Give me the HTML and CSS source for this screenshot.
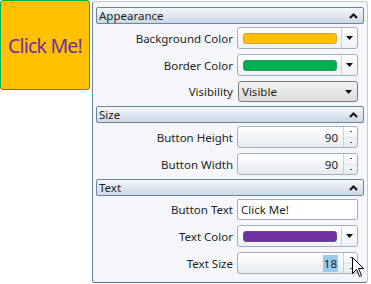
FILE: index.html
```html
<!DOCTYPE html>
<html>
<head>
  <title>Property Grid</title>
  <link rel="stylesheet" href="styles.css">
</head>
<body>

  <div class="stage">
    <button class="demo">Click Me!</button>

    <div class="grid">

      <section class="cat">
        <div class="cat-head">
          <span>Appearance</span>
          <svg class="chev" width="9" height="6" viewBox="0 0 9 6"><polyline points="1,5 4.5,1.5 8,5" /></svg>
        </div>
        <div class="rows">
          <div class="row">
            <label>Background Color</label>
            <div class="picker">
              <span class="swatch yellow"></span>
              <span class="drop"><svg width="7" height="4" viewBox="0 0 7 4"><polygon points="0,0 7,0 3.5,4" /></svg></span>
            </div>
          </div>
          <div class="row">
            <label>Border Color</label>
            <div class="picker">
              <span class="swatch green"></span>
              <span class="drop"><svg width="7" height="4" viewBox="0 0 7 4"><polygon points="0,0 7,0 3.5,4" /></svg></span>
            </div>
          </div>
          <div class="row">
            <label>Visibility</label>
            <div class="combo">
              <span>Visible</span>
              <svg width="7" height="4" viewBox="0 0 7 4"><polygon points="0,0 7,0 3.5,4" /></svg>
            </div>
          </div>
        </div>
      </section>

      <section class="cat">
        <div class="cat-head">
          <span>Size</span>
          <svg class="chev" width="9" height="6" viewBox="0 0 9 6"><polyline points="1,5 4.5,1.5 8,5" /></svg>
        </div>
        <div class="rows">
          <div class="row">
            <label>Button Height</label>
            <div class="spin">
              <span class="num">90</span>
              <span class="spin-btns"><i></i><i></i></span>
            </div>
          </div>
          <div class="row">
            <label>Button Width</label>
            <div class="spin">
              <span class="num">90</span>
              <span class="spin-btns"><i></i><i></i></span>
            </div>
          </div>
        </div>
      </section>

      <section class="cat">
        <div class="cat-head">
          <span>Text</span>
          <svg class="chev" width="9" height="6" viewBox="0 0 9 6"><polyline points="1,5 4.5,1.5 8,5" /></svg>
        </div>
        <div class="rows">
          <div class="row">
            <label>Button Text</label>
            <div class="textbox">Click Me!</div>
          </div>
          <div class="row">
            <label>Text Color</label>
            <div class="picker">
              <span class="swatch purple"></span>
              <span class="drop"><svg width="7" height="4" viewBox="0 0 7 4"><polygon points="0,0 7,0 3.5,4" /></svg></span>
            </div>
          </div>
          <div class="row">
            <label>Text Size</label>
            <div class="spin">
              <span class="num"><span class="sel">18</span></span>
              <span class="spin-btns"><i></i><i></i></span>
            </div>
          </div>
        </div>
      </section>

    </div>
  </div>

  <!-- mouse pointer over the spinner -->
  <svg class="cursor" width="13" height="21" viewBox="0 0 13 21">
    <polygon points="0.5,0.5 0.5,16.5 4.5,12.5 7.5,19.5 9.5,18.5 6.5,11.5 11.5,11.5" />
  </svg>

</body>
</html>
```

FILE: styles.css
```css
body {
  margin: 0;
  background: #ffffff;
  font-family: "Noto Sans", "Open Sans", sans-serif;
  font-size: 11.5px;
  color: #1e1e1e;
}

.stage {
  display: flex;
  align-items: flex-start;
}

.demo {
  width: 90px;
  height: 90px;
  padding: 0;
  background: #ffc000;
  border: 1px solid #00b050;
  border-radius: 3px;
  color: #7030a0;
  font-family: "Noto Sans", sans-serif;
  font-size: 19.5px;
  letter-spacing: -0.8px;
}

.grid {
  width: 276px;
  height: 282px;
  box-sizing: border-box;
  margin: 1px 0 0 2px;
  padding: 5px 3px 0 3px;
  background: #f4f6f9;
  border: 1px solid #c3ccd6;
  border-left-color: #6f849a;
  border-bottom-color: #5e7186;
  border-radius: 3px;
}

.cat-head {
  height: 17px;
  box-sizing: border-box;
  display: flex;
  align-items: center;
  justify-content: space-between;
  padding: 0 5px 0 2px;
  border: 1px solid #6a86a2;
  border-radius: 2px;
  background: linear-gradient(#f4f7fa, #cbd7e3);
}

.chev polyline {
  fill: none;
  stroke: #111;
  stroke-width: 2;
}

.rows {
  display: flex;
  flex-direction: column;
  gap: 5px;
  padding: 3px 0 4px;
}

.row {
  display: grid;
  grid-template-columns: 137px 121px;
  column-gap: 4px;
  align-items: center;
}

.row label {
  text-align: right;
  white-space: nowrap;
}

/* colour picker */
.picker {
  height: 22px;
  box-sizing: border-box;
  display: flex;
  align-items: center;
  padding-left: 5px;
  border: 1px solid #a3afbd;
  border-radius: 3px;
  background: linear-gradient(#ffffff, #eef1f5);
}

.swatch {
  width: 94px;
  height: 11px;
  box-sizing: border-box;
  border-radius: 3px;
  border: 1px solid;
}

.swatch.yellow { background: #ffc000; border-color: #c9a23a; }
.swatch.green { background: #00b050; border-color: #2f9a5c; }
.swatch.purple { background: #7030a0; border-color: #6a4a8a; }

.drop {
  margin-left: auto;
  width: 15px;
  height: 100%;
  display: flex;
  align-items: center;
  justify-content: center;
  border-left: 1px solid #c9d0d8;
}

.drop polygon,
.combo polygon {
  fill: #111;
}

/* combobox */
.combo {
  height: 21px;
  box-sizing: border-box;
  display: flex;
  align-items: center;
  justify-content: space-between;
  padding: 0 5px 0 3px;
  margin-left: 1px;
  border: 1px solid #7a7a7a;
  border-radius: 3px;
  background: linear-gradient(#f3f3f3, #dcdcdc);
}

/* numeric spinner */
.spin {
  height: 22px;
  box-sizing: border-box;
  display: flex;
  border: 1px solid #a3afbd;
  border-radius: 3px;
  background: linear-gradient(#ffffff, #e6ebf1);
}

.spin .num {
  flex: 1;
  display: flex;
  align-items: center;
  justify-content: flex-end;
  padding-right: 5px;
}

.sel {
  background: #99c9ef;
  padding: 1px 1px;
}

.spin-btns {
  width: 13px;
  display: flex;
  flex-direction: column;
  border-left: 1px solid #c9d0d8;
}

.spin-btns i {
  flex: 1;
  position: relative;
}

.spin-btns i::after {
  content: "";
  position: absolute;
  left: 6px;
  top: 4px;
  width: 2px;
  height: 1px;
  background: #555;
}

.spin-btns i + i {
  border-top: 1px solid #e1e6ec;
}

/* text box */
.textbox {
  height: 21px;
  box-sizing: border-box;
  display: flex;
  align-items: center;
  padding-left: 3px;
  border: 1px solid #a3afbd;
  border-radius: 2px;
  background: #ffffff;
}

.cursor {
  position: absolute;
  left: 352px;
  top: 257px;
}

.cursor polygon {
  fill: #ffffff;
  stroke: #000000;
  stroke-width: 1;
}
```
